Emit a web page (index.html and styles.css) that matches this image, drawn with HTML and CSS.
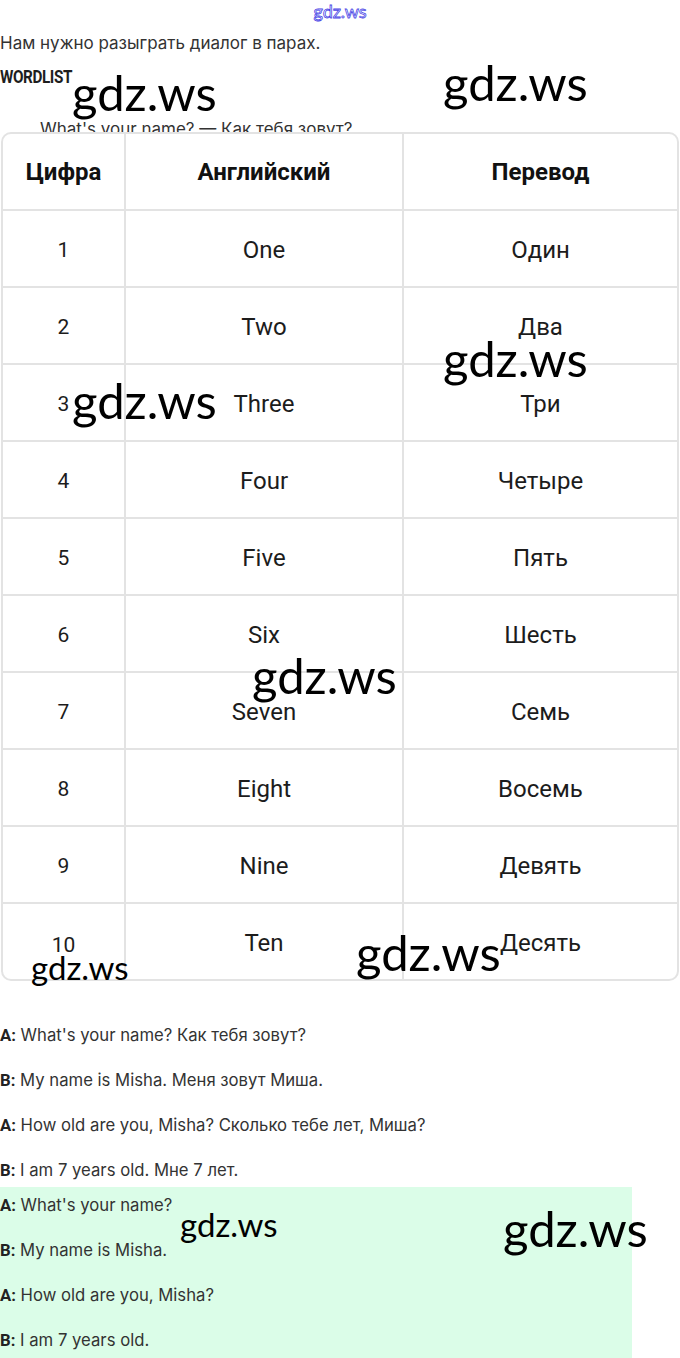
FILE: index.html
```html
<!DOCTYPE html>
<html lang="ru">
<head>
<meta charset="utf-8">
<title>Wordlist</title>
<link rel="stylesheet" href="styles.css">
</head>
<body>
<div class="page">
  <div class="site">gdz.ws</div>
  <p class="intro">Нам нужно разыграть диалог в парах.</p>
  <h2 class="wordlist">WORDLIST</h2>
  <div class="clipline"><span>What's your name? — Как тебя зовут?</span></div>

  <div class="table">
    <div class="cell head">Цифра</div><div class="cell head">Английский</div><div class="cell head">Перевод</div>
    <div class="cell num">1</div><div class="cell">One</div><div class="cell">Один</div>
    <div class="cell num">2</div><div class="cell">Two</div><div class="cell">Два</div>
    <div class="cell num">3</div><div class="cell">Three</div><div class="cell">Три</div>
    <div class="cell num">4</div><div class="cell">Four</div><div class="cell">Четыре</div>
    <div class="cell num">5</div><div class="cell">Five</div><div class="cell">Пять</div>
    <div class="cell num">6</div><div class="cell">Six</div><div class="cell">Шесть</div>
    <div class="cell num">7</div><div class="cell">Seven</div><div class="cell">Семь</div>
    <div class="cell num">8</div><div class="cell">Eight</div><div class="cell">Восемь</div>
    <div class="cell num">9</div><div class="cell">Nine</div><div class="cell">Девять</div>
    <div class="cell num last">10</div><div class="cell last">Ten</div><div class="cell last">Десять</div>
  </div>

  <div class="dialog plain">
    <p><b>A:</b> What's your name? Как тебя зовут?</p>
    <p><b>B:</b> My name is Misha. Меня зовут Миша.</p>
    <p><b>A:</b> How old are you, Misha? Сколько тебе лет, Миша?</p>
    <p><b>B:</b> I am 7 years old. Мне 7 лет.</p>
  </div>
  <div class="dialog green">
    <p><b>A:</b> What's your name?</p>
    <p><b>B:</b> My name is Misha.</p>
    <p><b>A:</b> How old are you, Misha?</p>
    <p><b>B:</b> I am 7 years old.</p>
  </div>

  <span class="wm big w1">gdz.ws</span>
  <span class="wm big w2">gdz.ws</span>
  <span class="wm big w3">gdz.ws</span>
  <span class="wm big w4">gdz.ws</span>
  <span class="wm big w5">gdz.ws</span>
  <span class="wm small w6">gdz.ws</span>
  <span class="wm big w7">gdz.ws</span>
  <span class="wm small w8">gdz.ws</span>
  <span class="wm big w9">gdz.ws</span>
</div>
</body>
</html>
```

FILE: styles.css
```css
html, body {
  margin: 0;
  padding: 0;
  background: #ffffff;
}
.page {
  position: relative;
  width: 680px;
  height: 1358px;
  overflow: hidden;
  font-family: "Inter", "Noto Sans", sans-serif;
  color: #333333;
}
.site {
  text-align: center;
  font-family: "Lato", sans-serif;
  font-size: 18px;
  line-height: 22px;
  height: 22px;
  color: #ffffff;
  -webkit-text-stroke: 0.8px #4a45e6;
}
.intro {
  margin: 10px 0 0 0;
  font-size: 17px;
  line-height: 22px;
}
.wordlist {
  margin: 13px 0 0 0;
  font-family: "Roboto", sans-serif;
  font-weight: 700;
  font-size: 18px;
  line-height: 20px;
  letter-spacing: -0.5px;
  color: #1e1e1e;
  transform: scaleX(0.85);
  transform-origin: left;
}
.clipline {
  margin-top: 35px;
  height: 10px;
  overflow: hidden;
  padding-left: 40px;
  font-size: 17px;
  line-height: 14px;
  white-space: nowrap;
}
.clipline span {
  display: block;
}
.table {
  margin: 0 1px;
  display: grid;
  grid-template-columns: 123px 278px 1fr;
  border: 2px solid #e3e3e3;
  border-radius: 10px;
  overflow: hidden;
  background: #fff;
}
.cell {
  height: 72px;
  padding-top: 3px;
  display: flex;
  align-items: center;
  justify-content: center;
  border-bottom: 2px solid #e3e3e3;
  border-right: 2px solid #e3e3e3;
  font-family: "Roboto", sans-serif;
  font-size: 24px;
  color: #1c1c1c;
}
.cell:nth-child(3n) {
  border-right: none;
}
.cell.last {
  border-bottom: none;
}
.cell.head {
  height: 74px;
  padding-top: 1px;
  font-weight: 700;
  font-size: 24px;
  color: #111;
}
.cell.num {
  font-size: 21px;
}
.cell.num.last {
  height: 69px;
  padding-top: 6px;
}
.dialog {
  font-size: 16.7px;
  line-height: 22px;
}
.dialog p {
  margin: 0;
  height: 45px;
  white-space: nowrap;
}
.dialog b {
  font-family: "Roboto", sans-serif;
  font-weight: 700;
  color: #222;
}
.dialog.plain {
  padding-top: 43px;
  height: 163px;
}
.dialog.green {
  background: #dbfde8;
  width: 632px;
  padding-top: 7px;
  height: 170px;
}
.wm {
  position: absolute;
  font-family: "Lato", sans-serif;
  color: #000;
  line-height: 1;
  white-space: nowrap;
}
.wm.big { font-size: 49px; }
.wm.small { font-size: 33px; }
.w1 { left: 72px; top: 68px; }
.w2 { left: 443px; top: 58px; }
.w3 { left: 443px; top: 334px; }
.w4 { left: 72px; top: 376px; }
.w5 { left: 252px; top: 651px; }
.w6 { left: 31px; top: 951px; }
.w7 { left: 356px; top: 928px; }
.w8 { left: 180px; top: 1208px; }
.w9 { left: 503px; top: 1204px; }
```
